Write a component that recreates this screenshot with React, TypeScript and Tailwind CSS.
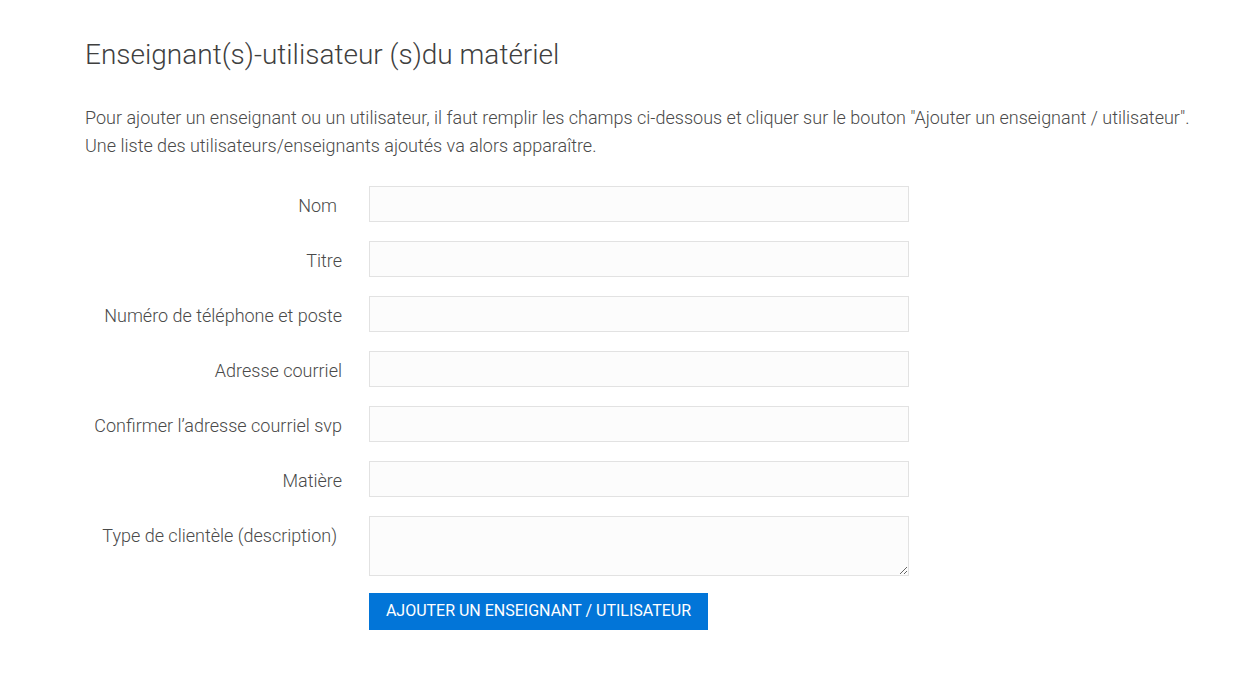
import React from "react";

const fields: { label: string; pr?: boolean; area?: boolean }[] = [
  { label: "Nom", pr: true },
  { label: "Titre" },
  { label: "Numéro de téléphone et poste" },
  { label: "Adresse courriel" },
  { label: "Confirmer l’adresse courriel svp" },
  { label: "Matière" },
  { label: "Type de clientèle (description)", pr: true, area: true },
];

export default function App() {
  return (
    <div
      className="min-h-[680px] w-full bg-white text-[#464646]"
      style={{ fontFamily: "Roboto, 'Liberation Sans', sans-serif" }}
    >
      <div className="pl-[85px] pt-[38px]">
        <h1 className="text-[28px] font-light leading-[34px] text-[#3f3f3f]">
          Enseignant(s)-utilisateur (s)du matériel
        </h1>
        <p className="mt-[32px] text-[18px] font-light leading-[28px] text-[#4a4a4a]">
          Pour ajouter un enseignant ou un utilisateur, il faut remplir les champs ci-dessous et cliquer sur le bouton "Ajouter un enseignant / utilisateur".
          <br />
          Une liste des utilisateurs/enseignants ajoutés va alors apparaître.
        </p>
        <div className="mt-[26px] flex flex-col gap-[19px]">
          {fields.map((f) => (
            <div key={f.label} className="flex items-start gap-[27px]">
              <label
                className={`h-[36px] w-[257px] text-right text-[18px] font-light leading-[40px] text-[#4a4a4a] ${f.pr ? "pr-[5px]" : ""}`}
              >
                {f.label}
              </label>
              {f.area ? (
                <textarea className="h-[60px] w-[540px] border border-[#e2e2e2] bg-[#fcfcfc] outline-none" />
              ) : (
                <input className="h-[36px] w-[540px] border border-[#e2e2e2] bg-[#fcfcfc] outline-none" />
              )}
            </div>
          ))}
          <div className="-mt-[2px] flex">
            <button className="ml-[284px] h-[37px] w-[339px] bg-[#0275d8] pb-[1px] text-[16px] font-normal uppercase text-white">
              Ajouter un enseignant / utilisateur
            </button>
          </div>
        </div>
      </div>
    </div>
  );
}
